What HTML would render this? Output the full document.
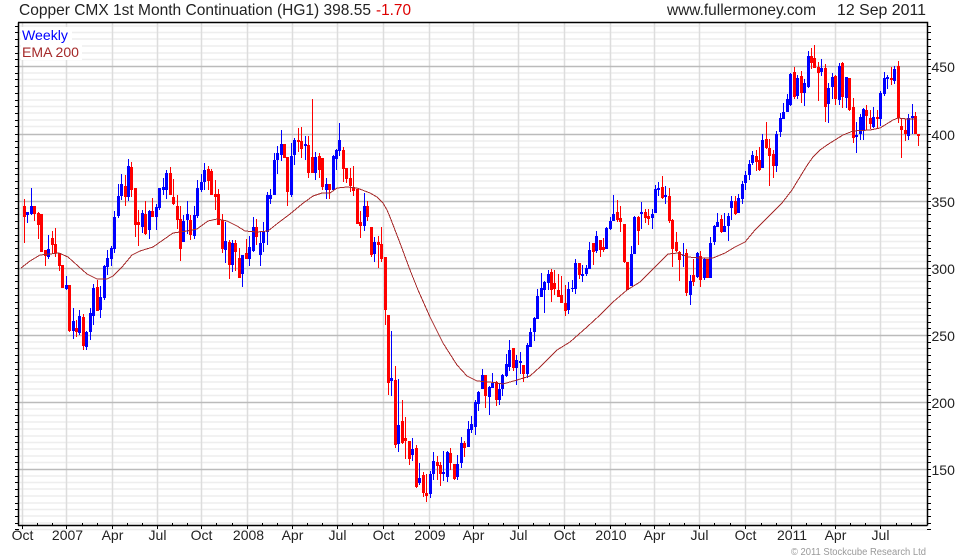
<!DOCTYPE html>
<html><head><meta charset="utf-8"><title>Copper CMX chart</title>
<style>html,body{margin:0;padding:0;background:#fff;width:980px;height:560px;overflow:hidden}svg{display:block}text{font-family:"Liberation Sans",Arial,sans-serif}</style></head>
<body>
<svg width="980" height="560" viewBox="0 0 980 560" xmlns="http://www.w3.org/2000/svg">
<rect width="980" height="560" fill="#fff"/>
<g fill="none">
<defs><path id="m" d="M19 7H927M19 13.5H927M19 20H927M19 27H927M19 34H927M19 40.5H927M19 47H927M19 54H927M19 60.5H927"/><path id="t" d="M15 7.5H19M927 7.5H931M15 13.5H19M927 13.5H931M15 20.5H19M927 20.5H931M15 27.5H19M927 27.5H931M15 34.5H19M927 34.5H931M15 40.5H19M927 40.5H931M15 47.5H19M927 47.5H931M15 54.5H19M927 54.5H931M15 60.5H19M927 60.5H931"/></defs>
<g stroke="#eeeeee" stroke-width="1.5">
<path d="M19 26H927M19 32.5H927M19 39H927M19 46H927M19 53H927M19 59.5H927"/>
<use href="#m" y="66"/><use href="#m" y="134"/><use href="#m" y="201"/><use href="#m" y="268"/><use href="#m" y="335"/><use href="#m" y="402"/><use href="#m" y="469"/>
</g>
<path stroke="#dddddd" stroke-width="1.5" d="M22.5 23V525M66.5 23V525M112.5 23V525M157.5 23V525M201.5 23V525M247.5 23V525M292.5 23V525M337.5 23V525M383.5 23V525M429.5 23V525M473.5 23V525M518.5 23V525M564.5 23V525M610.5 23V525M654.5 23V525M699.5 23V525M745.5 23V525M791.5 23V525M835.5 23V525M880.5 23V525"/>
<path stroke="#bbbbbb" stroke-width="1.5" d="M19 66.5H927M19 134.5H927M19 201.5H927M19 268.5H927M19 335.5H927M19 402.5H927M19 469.5H927"/>
</g>
<rect x="21" y="27" width="51" height="17" fill="#fff"/>
<rect x="21" y="44" width="61" height="16" fill="#fff"/>
<g fill="none" shape-rendering="crispEdges">
<path stroke="#0000ff" stroke-width="1" d="M27.5 212V223M31.5 188V215M48.5 235V259M66.5 276V290M73.5 308V339M79.5 310V335M86.5 331V350M90.5 308V340M93.5 284V325M100.5 286V318M104.5 265V300M107.5 250V275M111.5 246V266M114.5 211V253M118.5 184V218M121.5 174V200M128.5 159V201M142.5 210V233M149.5 210V239M156.5 204V230M159.5 188V210M163.5 178V195M166.5 170V199M183.5 215V242M187.5 201V234M194.5 206V239M197.5 180V218M201.5 174V192M204.5 163V190M225.5 222V263M232.5 240V272M242.5 255V287M249.5 236V266M253.5 217V252M260.5 231V266M263.5 222V252M267.5 192V245M270.5 189V204M274.5 153V195M277.5 146V174M281.5 130V161M291.5 143V197M294.5 138V165M305.5 136V160M315.5 152V180M326.5 178V199M333.5 155V190M336.5 149V170M339.5 123V156M364.5 193V231M374.5 237V262M391.5 331V396M398.5 379V452M412.5 438V461M419.5 463V485M430.5 471V498M433.5 452V480M443.5 451V481M447.5 451V482M457.5 455V480M461.5 437V468M468.5 421V447M471.5 416V433M475.5 400V435M478.5 391V411M482.5 369V389M489.5 386V415M492.5 373V388M499.5 383V405M502.5 374V396M506.5 354V377M509.5 340V371M516.5 355V385M520.5 352V374M527.5 343V378M530.5 328V347M534.5 317V341M537.5 289V319M541.5 273V297M544.5 281V313M548.5 270V290M568.5 282V314M572.5 280V292M575.5 259V294M582.5 265V282M586.5 265V276M589.5 242V269M596.5 231V253M606.5 227V249M610.5 217V230M613.5 195V221M631.5 246V286M634.5 216V254M641.5 202V229M652.5 209V229M655.5 185V213M658.5 182V196M665.5 186V204M683.5 243V267M690.5 275V305M697.5 252V278M704.5 258V280M710.5 237V278M714.5 225V245M717.5 213V227M724.5 213V232M728.5 213V241M731.5 196V220M738.5 194V213M742.5 181V204M745.5 171V190M749.5 160V180M752.5 151V165M762.5 134V168M776.5 131V172M780.5 113V137M783.5 103V119M787.5 94V112M790.5 73V106M797.5 75V99M804.5 79V106M808.5 51V88M821.5 59V76M828.5 83V123M832.5 73V99M839.5 63V105M846.5 77V108M856.5 122V153M860.5 114V140M863.5 108V140M873.5 107V128M880.5 91V126M884.5 72V96M887.5 75V89M894.5 66V84M908.5 114V140M912.5 104V134"/>
<path stroke="#0000ff" stroke-width="3" d="M27.5 212V215M31.5 206V214M48.5 249V257M66.5 285V289M73.5 321V331M79.5 316V333M86.5 332V347M90.5 313V332M93.5 288V316M100.5 297V310M104.5 266V298M107.5 258V267M111.5 248V259M114.5 217V249M118.5 196V216M121.5 184V196M128.5 166V197M142.5 213V227M149.5 211V230M156.5 207V217M159.5 188V208M163.5 187V190M166.5 173V190M183.5 221V242M187.5 214V220M194.5 215V236M197.5 188V216M201.5 182V190M204.5 170V182M225.5 241V250M232.5 243V265M242.5 255V274M249.5 247V259M253.5 227V251M260.5 243V255M263.5 231V243M267.5 195V232M270.5 195V199M274.5 160V195M277.5 153V160M281.5 144V155M291.5 156V195M294.5 140V155M305.5 144V146M315.5 157V173M326.5 184V190M333.5 156V190M336.5 150V159M339.5 140V151M364.5 206V226M374.5 242V254M391.5 378V381M398.5 425V444M412.5 449V455M419.5 478V483M430.5 474V494M433.5 461V474M443.5 472V474M447.5 452V477M457.5 464V477M461.5 443V463M468.5 429V447M471.5 424V430M475.5 402V427M478.5 392V404M482.5 375V389M489.5 387V397M492.5 383V388M499.5 389V400M502.5 375V389M506.5 364V376M509.5 350V367M516.5 360V368M520.5 361V363M527.5 345V374M530.5 332V347M534.5 318V332M537.5 296V319M541.5 288V297M544.5 282V290M548.5 274V283M568.5 289V310M572.5 288V289M575.5 263V289M582.5 274V276M586.5 268V274M589.5 250V269M596.5 236V251M606.5 228V249M610.5 221V229M613.5 214V221M631.5 254V286M634.5 217V254M641.5 212V214M652.5 214V218M655.5 189V213M658.5 188V190M665.5 195V197M683.5 255V256M690.5 281V295M697.5 253V277M704.5 259V278M710.5 243V278M714.5 226V242M717.5 222V227M724.5 226V232M728.5 216V226M731.5 201V208M738.5 198V213M742.5 184V199M745.5 175V183M749.5 164V175M752.5 155V163M762.5 140V168M776.5 134V166M780.5 118V132M783.5 112V119M787.5 99V112M790.5 74V105M797.5 78V96M804.5 83V93M808.5 56V87M821.5 68V72M828.5 88V104M832.5 77V87M839.5 66V100M846.5 77V98M856.5 135V137M860.5 117V134M863.5 109V131M873.5 117V127M880.5 93V119M884.5 78V94M887.5 77V79M894.5 69V81M908.5 118V136M912.5 116V118"/>
<path stroke="#ff0000" stroke-width="1" d="M24.5 199V243M34.5 206V221M38.5 212V239M41.5 214V252M45.5 250V266M52.5 231V253M55.5 228V257M59.5 253V271M62.5 265V288M69.5 285V332M76.5 320V337M83.5 314V350M97.5 280V311M125.5 175V206M131.5 162V197M135.5 188V237M138.5 210V246M145.5 201V235M152.5 198V217M170.5 167V195M173.5 179V205M177.5 195V229M180.5 206V261M190.5 215V240M208.5 166V190M211.5 169V195M215.5 180V210M218.5 189V225M222.5 214V253M229.5 240V279M235.5 240V271M239.5 248V278M246.5 239V259M256.5 219V245M284.5 144V158M287.5 157V206M298.5 128V152M301.5 127V158M308.5 136V178M312.5 99V173M319.5 153V178M322.5 158V190M329.5 184V199M343.5 147V182M346.5 168V183M350.5 168V192M353.5 166V196M357.5 189V224M360.5 211V238M367.5 201V221M371.5 227V257M378.5 236V268M381.5 227V262M385.5 257V325M388.5 315V395M395.5 366V448M402.5 400V444M405.5 417V459M409.5 441V465M416.5 445V488M423.5 472V497M426.5 474V502M437.5 456V480M440.5 462V486M450.5 448V470M454.5 464V480M464.5 441V457M485.5 375V408M496.5 381V406M513.5 348V371M523.5 365V382M551.5 269V302M554.5 270V295M558.5 274V297M561.5 276V303M565.5 285V316M579.5 263V279M593.5 243V265M600.5 240V257M603.5 238V252M617.5 200V222M620.5 206V232M624.5 224V263M627.5 262V290M638.5 216V245M645.5 209V223M648.5 209V225M662.5 176V199M669.5 188V223M672.5 219V267M676.5 232V252M679.5 251V281M686.5 249V296M693.5 259V286M700.5 251V287M707.5 259V278M721.5 215V233M735.5 196V215M756.5 150V171M759.5 147V171M766.5 122V149M769.5 139V186M773.5 150V178M794.5 67V99M801.5 71V103M811.5 48V69M814.5 45V68M818.5 62V101M825.5 64V122M835.5 75V105M842.5 62V108M849.5 78V111M853.5 98V143M866.5 105V130M870.5 110V129M877.5 110V129M891.5 67V85M898.5 61V123M901.5 118V158M905.5 119V141M915.5 112V134M918.5 134V146"/>
<path stroke="#ff0000" stroke-width="3" d="M24.5 206V217M34.5 206V214M38.5 213V225M41.5 214V252M45.5 250V256M52.5 238V245M55.5 244V253M59.5 253V266M62.5 265V288M69.5 285V331M76.5 328V332M83.5 317V346M97.5 287V311M125.5 186V197M131.5 167V190M135.5 188V225M138.5 222V225M145.5 214V234M152.5 211V217M170.5 173V195M173.5 197V204M177.5 206V220M180.5 219V249M190.5 220V235M208.5 169V181M211.5 171V195M215.5 194V197M218.5 194V225M222.5 220V249M229.5 242V265M235.5 243V252M239.5 258V278M246.5 253V259M256.5 227V237M284.5 144V158M287.5 157V192M298.5 140V142M301.5 141V149M308.5 145V173M312.5 157V173M319.5 156V170M322.5 158V187M329.5 184V190M343.5 150V169M346.5 168V179M350.5 178V186M353.5 187V191M357.5 189V224M360.5 222V226M367.5 206V217M371.5 227V255M378.5 242V245M381.5 244V259M385.5 257V310M388.5 315V383M395.5 380V445M402.5 421V443M405.5 438V441M409.5 441V459M416.5 448V487M423.5 475V493M426.5 493V496M437.5 462V466M440.5 465V474M450.5 453V463M454.5 464V479M464.5 443V448M485.5 375V396M496.5 382V400M513.5 348V368M523.5 365V374M551.5 272V290M554.5 283V289M558.5 290V297M561.5 295V303M565.5 303V311M579.5 263V275M593.5 243V252M600.5 240V250M603.5 247V250M617.5 212V220M620.5 218V222M624.5 224V262M627.5 262V290M638.5 217V231M645.5 212V218M648.5 216V219M662.5 187V198M669.5 196V221M672.5 220V249M676.5 242V251M679.5 252V260M686.5 253V293M693.5 275V282M700.5 256V280M707.5 259V278M721.5 219V232M735.5 201V214M756.5 156V162M759.5 160V170M766.5 139V148M769.5 148V156M773.5 154V166M794.5 72V97M801.5 76V93M811.5 56V63M814.5 58V68M818.5 67V73M825.5 68V107M835.5 76V99M842.5 63V97M849.5 78V110M853.5 107V138M866.5 110V116M870.5 118V124M877.5 117V119M891.5 78V80M898.5 66V118M901.5 126V130M905.5 130V134M915.5 116V134M918.5 134V136"/>
<path stroke="#a52a2a" stroke-width="1" d="M21 268L30 261L40 255L50 254L59 253L68 257L78 266L87 274L97 279L107 279L113 276L122 267L132 255L140 251L153 247L163 240L173 233L187 231L197 229L208 221L217 219L227 221L237 226L245 231L257 232L268 231L278 223L290 214L302 204L313 196L322 193L330 193L337 188L347 187L357 188L370 193L377 197L383 203L387 210L390 217L400 243L410 270L418 290L430 317L443 343L457 365L467 376L477 381L490 382L503 384L517 380L530 376L540 367L557 350L570 342L587 327L600 315L613 302L627 290L640 282L650 272L660 262L668 254L678 253L688 257L700 258L713 258L725 253L735 247L745 242L755 230L770 215L782 203L792 190L803 172L808 164L813 157L820 150L827 145L843 135L853 131L870 130L880 128L893 120L898 118L907 119L917 119"/>
<g stroke="#000">
<path d="M15 26.5H19M927 26.5H931M15 32.5H19M927 32.5H931M15 39.5H19M927 39.5H931M15 46.5H19M927 46.5H931M15 53.5H19M927 53.5H931M15 59.5H19M927 59.5H931M15 66.5H19M927 66.5H931M15 134.5H19M927 134.5H931M15 201.5H19M927 201.5H931M15 268.5H19M927 268.5H931M15 335.5H19M927 335.5H931M15 402.5H19M927 402.5H931M15 469.5H19M927 469.5H931"/>
<use href="#t" y="66"/><use href="#t" y="134"/><use href="#t" y="201"/><use href="#t" y="268"/><use href="#t" y="335"/><use href="#t" y="402"/><use href="#t" y="469"/>
<path d="M22.5 525V529M66.5 525V529M112.5 525V529M157.5 525V529M201.5 525V529M247.5 525V529M292.5 525V529M337.5 525V529M383.5 525V529M429.5 525V529M473.5 525V529M518.5 525V529M564.5 525V529M610.5 525V529M654.5 525V529M699.5 525V529M745.5 525V529M791.5 525V529M835.5 525V529M880.5 525V529"/>
<path d="M37.5 523V525M52.5 523V525M82.5 523V525M97.5 523V525M127.5 523V525M142.5 523V525M172.5 523V525M187.5 523V525M216.5 523V525M232.5 523V525M262.5 523V525M277.5 523V525M307.5 523V525M322.5 523V525M352.5 523V525M368.5 523V525M398.5 523V525M414.5 523V525M444.5 523V525M459.5 523V525M488.5 523V525M503.5 523V525M533.5 523V525M549.5 523V525M579.5 523V525M595.5 523V525M625.5 523V525M640.5 523V525M669.5 523V525M684.5 523V525M714.5 523V525M730.5 523V525M761.5 523V525M776.5 523V525M806.5 523V525M821.5 523V525M850.5 523V525M865.5 523V525M896.5 523V525M911.5 523V525"/>
</g>
</g>
<path fill="none" stroke="#000" stroke-width="1.5" d="M18.5 22.5V525.5M18 22.5H927.5V525.5M18 525.5H927.5"/>
<text x="19" y="15" font-size="16" fill="#222" textLength="352" lengthAdjust="spacingAndGlyphs">Copper CMX 1st Month Continuation (HG1) 398.55</text>
<text x="376" y="15" font-size="16" fill="#dd0000" textLength="35" lengthAdjust="spacingAndGlyphs">-1.70</text>
<text x="667" y="15" font-size="16" fill="#222" textLength="149" lengthAdjust="spacingAndGlyphs">www.fullermoney.com</text>
<text x="837" y="15" font-size="16" fill="#222" textLength="89" lengthAdjust="spacingAndGlyphs">12 Sep 2011</text>
<text x="22" y="40" font-size="14" fill="#0000ff" textLength="46" lengthAdjust="spacingAndGlyphs">Weekly</text>
<text x="22" y="57" font-size="14" fill="#a52a2a" textLength="57" lengthAdjust="spacingAndGlyphs">EMA 200</text>
<g font-size="14" fill="#222">
<text x="931.5" y="72">450</text><text x="931.5" y="140">400</text><text x="931.5" y="207">350</text><text x="931.5" y="274">300</text><text x="931.5" y="341">250</text><text x="931.5" y="408">200</text><text x="931.5" y="475">150</text>
</g>
<g font-size="14" fill="#222" text-anchor="middle">
<text x="22.5" y="540">Oct</text><text x="67.5" y="540">2007</text><text x="112.5" y="540">Apr</text><text x="157.5" y="540">Jul</text><text x="201.5" y="540">Oct</text><text x="248.5" y="540">2008</text><text x="292.5" y="540">Apr</text><text x="337.5" y="540">Jul</text><text x="383.5" y="540">Oct</text><text x="430" y="540">2009</text><text x="473.5" y="540">Apr</text><text x="518.5" y="540">Jul</text><text x="564.5" y="540">Oct</text><text x="611" y="540">2010</text><text x="654.5" y="540">Apr</text><text x="699.5" y="540">Jul</text><text x="745.5" y="540">Oct</text><text x="792" y="540">2011</text><text x="835.5" y="540">Apr</text><text x="880.5" y="540">Jul</text>
</g>
<text x="791" y="555" font-size="10" fill="#999" textLength="135" lengthAdjust="spacingAndGlyphs">© 2011 Stockcube Research Ltd</text>
</svg>
</body></html>
